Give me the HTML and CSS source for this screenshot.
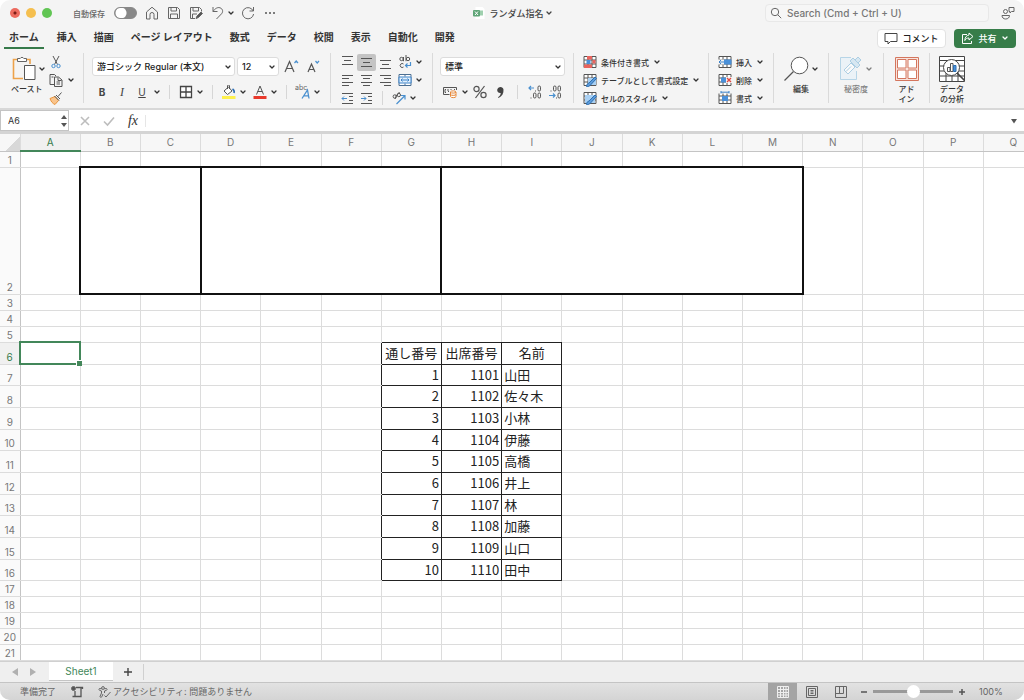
FILE: index.html
```html
<!DOCTYPE html>
<html lang="ja">
<head>
<meta charset="utf-8">
<title>ランダム指名</title>
<link rel="stylesheet" href="styles.css">
</head>
<body>
<svg class="defs" aria-hidden="true">
  <symbol id="chev" viewBox="0 0 8 8"><path d="M2 3l2 2 2-2" fill="none" stroke="currentColor" stroke-width="1.3" stroke-linecap="round" stroke-linejoin="round"/></symbol>
  <symbol id="grid" viewBox="0 0 14 14"><path d="M1 1.500h12v11H1zM1 5h12M1 9h12M5 1.500v11M9 1.500v11" fill="#fff" stroke="#555" stroke-width="1"/></symbol>
</svg>
<div class="window">
  <header class="titlebar">
    <div class="lights"><span class="light red"></span><span class="light yellow"></span><span class="light green"></span></div>
    <label class="autosave">自動保存<input type="checkbox" class="switch"></label>
    <div class="quick">
      <button aria-label="ホームへ"><svg width="14" height="14" viewBox="0 0 14 14"><path d="M1.500 6L7 1.200 12.500 6v7H9V8.500a2 2 0 0 0-4 0V13H1.500z"/></svg></button>
      <button aria-label="保存"><svg width="14" height="14" viewBox="0 0 14 14"><path d="M1.500 1.500h9l2 2v9h-11zM4 1.500v3.500h5.500V1.500M3.500 12.500V8h7v4.500"/></svg></button>
      <button aria-label="名前を付けて保存"><svg width="14" height="14" viewBox="0 0 14 14"><path d="M6 12.500H1.500v-11h9l2 2v2M4 1.500v3.500h5.500V1.500M3.500 12.500V8H8"/><path d="M7 12.500l1-2.500 4-4 1.500 1.500-4 4z" fill="#555"/></svg></button>
      <button aria-label="元に戻す"><svg width="14" height="14" viewBox="0 0 14 14"><path d="M2 1v4.500h4.500M2 5.500C4 2.500 6.500 1 9 1.800c3 1 3.300 4.200 1.500 6L5.500 13"/></svg></button>
      <button class="drop" aria-label="元に戻す一覧"><svg class="chev"><use href="#chev"/></svg></button>
      <button aria-label="やり直し"><svg width="14" height="14" viewBox="0 0 14 14"><path d="M12.500 1v4H8.500M12.200 5A5.600 5.600 0 1 0 12.600 8"/></svg></button>
      <button aria-label="その他"><svg width="14" height="14" viewBox="0 0 14 14"><g fill="#555" stroke="none"><circle cx="3" cy="7" r="1"/><circle cx="7" cy="7" r="1"/><circle cx="11" cy="7" r="1"/></g></svg></button>
    </div>
    <button class="doc"><svg width="12" height="12" viewBox="0 0 12 12"><path d="M2.500 0h7l2 2v10h-9z" fill="#fff"/><path d="M5 3.500h5v5H5z" fill="#9fd0ae"/><rect y="3" width="7" height="6.500" rx="1" fill="#5fa577"/><path d="M2 4.500l3 3.500M5 4.500L2 8" stroke="#fff" fill="none"/></svg>ランダム指名<svg class="chev"><use href="#chev"/></svg></button>
    <label class="search"><svg width="12" height="12" viewBox="0 0 12 12"><circle cx="5" cy="5" r="3.700"/><path d="M7.800 7.800l3.400 3.400"/></svg><input type="text" placeholder="Search (Cmd + Ctrl + U)" aria-label="Search"></label>
    <button class="people" aria-label="共同作業"><svg width="14" height="14" viewBox="0 0 14 14"><circle cx="4.500" cy="5.500" r="2"/><path d="M1 9.500h7.500c0 2-1.500 3.500-3.800 3.500S1 11.500 1 9.500zM8 1.500h5v4h-2.500L9 7V5.500H8z"/></svg></button>
  </header>

  <nav class="tabs">
    <button class="tab active">ホーム</button><button class="tab">挿入</button><button class="tab">描画</button><button class="tab">ページ レイアウト</button><button class="tab">数式</button><button class="tab">データ</button><button class="tab">校閲</button><button class="tab">表示</button><button class="tab">自動化</button><button class="tab">開発</button>
    <button class="comment"><svg width="14" height="13" viewBox="0 0 14 13"><path d="M1 1.500h12v8H6.500L4 12V9.500H1z"/></svg>コメント</button>
    <button class="share"><svg width="13" height="13" viewBox="0 0 13 13"><path d="M6 2.500H1.500v9h9V9M8 1l4 3.500L8 8V6C6 6 5 6.500 3.800 8.500 4 5 5.500 3.500 8 3z"/></svg>共有<svg class="chev"><use href="#chev"/></svg></button>
  </nav>

  <div class="ribbon">
    <div class="group clip">
      <div class="big"><button class="bigrow" aria-label="ペースト"><svg width="24" height="27" viewBox="0 0 24 27"><path d="M6 4.500H1.500v19H11M14 4.500h4V9" fill="none" stroke="#eda24a" stroke-width="1.600"/><path d="M5.500 6.500v-3h2.700a2 2 0 0 1 3.600 0h2.700v3z" fill="#fff" stroke="#666"/><path d="M12.500 10.500H23v14H12.500z" fill="#fff" stroke="#555"/></svg><svg class="chev"><use href="#chev"/></svg></button><span class="label">ペースト</span></div>
      <div class="rows">
        <div class="row"><button class="ico" aria-label="切り取り"><svg width="14" height="14" viewBox="0 0 14 14"><path d="M4 1l4.500 8.500M10 1L5.500 9.500" stroke="#555"/><g stroke="#4a90cf"><circle cx="4.500" cy="11" r="1.700"/><circle cx="9.500" cy="11" r="1.700"/></g></svg></button></div>
        <div class="row"><button class="ico" aria-label="コピー"><svg width="14" height="14" viewBox="0 0 14 14"><path d="M5.500 11.500H1v-10h4.500L7 3M5.500 4h4L13 7v6.500H5.500zM9 4.500V7.500h3.500M7.500 9h3.500M7.500 11h3.500M2.500 4h2" stroke="#555"/></svg></button><button class="drop" aria-label="コピー一覧"><svg class="chev"><use href="#chev"/></svg></button></div>
        <div class="row"><button class="ico" aria-label="書式のコピー"><svg width="14" height="14" viewBox="0 0 14 14"><path d="M1 7.500l5-2 3.500 4L6 13.500C3.500 12.500 2 10.500 1 7.500z" fill="#f9c48c" stroke="#e8953d"/><path d="M5.500 5l4.500 4.500M7 4l4 4M9 5.500l3.500-4" stroke="#555"/></svg></button></div>
      </div>
    </div><span class="sep"></span>

    <div class="group font">
      <div class="row first">
        <span class="pick name"><select aria-label="フォント"><option>游ゴシック Regular (本文)</option></select><svg class="chev"><use href="#chev"/></svg></span>
        <span class="pick size"><select aria-label="フォント サイズ"><option>12</option></select><svg class="chev"><use href="#chev"/></svg></span>
        <button class="ico grow" aria-label="拡大"><svg width="16" height="16" viewBox="0 0 16 16"><path d="M2 13L6.500 2.500 11 13M3.500 9.500h6" stroke="#555" stroke-width="1.200"/><path d="M11.500 4l1.700-2L15 4" stroke="#4a90cf" stroke-width="1.200"/></svg></button>
        <button class="ico grow" aria-label="縮小"><svg width="16" height="16" viewBox="0 0 16 16"><path d="M3 13L6.500 5 10 13M4 10.500h5" stroke="#555" stroke-width="1.200"/><path d="M10.500 2l1.700 2L14 2" stroke="#4a90cf" stroke-width="1.200"/></svg></button>
      </div>
      <div class="row second">
        <button class="ltr b">B</button><button class="ltr i">I</button><button class="ltr u">U</button><button class="drop" aria-label="下線一覧"><svg class="chev"><use href="#chev"/></svg></button><span class="bar"></span>
        <button class="ico" aria-label="罫線"><svg width="14" height="14" viewBox="0 0 14 14"><path d="M1.500 1.500h11v11h-11zM7 1.500v11M1.500 7h11" fill="#fff" stroke="#444" stroke-width="1.300"/></svg></button><button class="drop" aria-label="罫線一覧"><svg class="chev"><use href="#chev"/></svg></button><span class="bar"></span>
        <button class="ico" aria-label="塗りつぶし"><svg width="14" height="14" viewBox="0 0 14 14"><path d="M0 11h13.500v3H0z" fill="#fdf04e"/><path d="M2 6l4.500-4 3.500 4-4.500 3.500zM5.500 4V1a1 1 0 0 1 2 0v3" fill="#fff" stroke="#555"/><path d="M10.500 4c1.500 1 2 2.500 1.500 4" stroke="#2f6fb5" stroke-width="1.600"/></svg></button><button class="drop" aria-label="塗りつぶし一覧"><svg class="chev"><use href="#chev"/></svg></button>
        <button class="ico color" aria-label="文字色"><svg width="14" height="14" viewBox="0 0 14 14"><path d="M0.500 11h13v3h-13z" fill="#e8392c"/><path d="M3.500 9.500L7 1l3.500 8.500M4.700 6.500h4.600" stroke="#555"/></svg></button><button class="drop" aria-label="文字色一覧"><svg class="chev"><use href="#chev"/></svg></button><span class="bar"></span>
        <button class="ico" aria-label="ふりがな"><svg width="16" height="16" viewBox="0 0 16 16"><text x="0" y="6" font-size="7" fill="#666">abc</text><path d="M7 14.500L12.500 6 14 14.500M9 11.800h4.500" stroke="#4a90cf" stroke-width="1.300"/></svg></button><button class="drop" aria-label="ふりがな一覧"><svg class="chev"><use href="#chev"/></svg></button>
      </div>
    </div><span class="sep"></span>

    <div class="group align">
      <div class="row"><button class="ico" aria-label="上揃え"><svg width="13" height="13" viewBox="0 0 13 13"><path d="M1 0.500h11M3 4.500h7M1 8.500h11"/></svg></button><button class="ico on" aria-label="上下中央"><svg width="13" height="13" viewBox="0 0 13 13"><path d="M1 2.500h11M3 6.500h7M1 10.500h11"/></svg></button><button class="ico" aria-label="下揃え"><svg width="13" height="13" viewBox="0 0 13 13"><path d="M1 4.500h11M3 8.500h7M1 12.500h11"/></svg></button><button class="ico" aria-label="折り返し"><svg width="14" height="14" viewBox="0 0 14 14"><g stroke="#555"><circle cx="3.500" cy="4" r="1.700"/><path d="M5.500 2v4.200M8 0v6.200M5.500 9a2 2 0 1 0 0 3"/><circle cx="10" cy="4" r="1.700"/></g><path d="M12.500 7v3.500H7.500M9.500 8.500l-2 2 2 2" stroke="#4a90cf" stroke-width="1.200"/></svg></button><button class="drop" aria-label="折り返し一覧"><svg class="chev"><use href="#chev"/></svg></button></div>
      <div class="row"><button class="ico" aria-label="左揃え"><svg width="13" height="13" viewBox="0 0 13 13"><path d="M1 1.500h11M1 4.500h7M1 8.500h11M1 11.500h7"/></svg></button><button class="ico" aria-label="中央揃え"><svg width="13" height="13" viewBox="0 0 13 13"><path d="M1 1.500h11M3 4.500h7M1 8.500h11M3 11.500h7"/></svg></button><button class="ico" aria-label="右揃え"><svg width="13" height="13" viewBox="0 0 13 13"><path d="M1 1.500h11M5 4.500h7M1 8.500h11M5 11.500h7"/></svg></button><button class="ico" aria-label="セルを結合"><svg width="14" height="14" viewBox="0 0 14 14"><path d="M1 1.500h12v11H1zM7 1.500v2M7 10.500v2" fill="#fff" stroke="#4b6f93"/><path d="M1 4h12v6H1z" fill="#e2f0fc" stroke="#3d83c9"/><path d="M3 7h8M4.500 5.500L3 7l1.500 1.500M9.500 5.500L11 7 9.500 8.500" stroke="#3d83c9"/></svg></button><button class="drop" aria-label="結合一覧"><svg class="chev"><use href="#chev"/></svg></button></div>
      <div class="row"><button class="ico" aria-label="インデントを減らす"><svg width="13" height="13" viewBox="0 0 13 13"><path d="M1 1.500h11M8 4.500h4M8 8.500h4M1 11.500h11"/><path d="M6 6.500H1M3 4.500l-2 2 2 2" stroke="#4a90cf"/></svg></button><button class="ico" aria-label="インデントを増やす"><svg width="13" height="13" viewBox="0 0 13 13"><path d="M1 1.500h11M8 4.500h4M8 8.500h4M1 11.500h11"/><path d="M1 6.500h5M4 4.500l2 2-2 2" stroke="#4a90cf"/></svg></button><span class="bar"></span><button class="ico" aria-label="方向"><svg width="14" height="14" viewBox="0 0 14 14"><g stroke="#555"><circle cx="2.800" cy="5.500" r="1.700"/><path d="M4.500 4L3 8M7.500 1L4.500 5"/><circle cx="6.800" cy="4" r="1.700"/></g><path d="M4.500 13L12.500 5M9 4.500h4v4" stroke="#4a90cf" stroke-width="1.200"/></svg></button><button class="drop" aria-label="方向一覧"><svg class="chev"><use href="#chev"/></svg></button></div>
    </div><span class="sep"></span>

    <div class="group number">
      <div class="row first"><span class="pick format"><select aria-label="表示形式"><option>標準</option></select><svg class="chev"><use href="#chev"/></svg></span></div>
      <div class="row second">
        <button class="ico" aria-label="通貨"><svg width="14" height="14" viewBox="0 0 14 14"><path d="M6.500 9.500H0.500v-7h13V5M3 4.500H2v3h1M5 4v2l1 1M8 4v1M11 4.500h1" stroke="#555"/><path d="M7.500 7c0-1.500 5.500-1.500 5.500 0v4.500c0 1.500-5.500 1.500-5.500 0zM7.500 7c0 1.500 5.500 1.500 5.500 0M7.500 9.300c0 1.500 5.500 1.500 5.500 0" fill="#fff" stroke="#e8893a"/></svg></button><button class="drop" aria-label="通貨一覧"><svg class="chev"><use href="#chev"/></svg></button><button class="ico" aria-label="パーセント"><svg width="14" height="14" viewBox="0 0 14 14"><path d="M11.500 1l-9 12" stroke="#555" stroke-width="1.200"/><g stroke="#555" stroke-width="1.200"><circle cx="3.500" cy="4" r="2.600"/><circle cx="10.500" cy="10" r="2.600"/></g></svg></button><button class="ico" aria-label="桁区切り"><svg width="14" height="14" viewBox="0 0 14 14"><path d="M10.500 4.500C10.800 8.500 9 11.500 5.500 13l-.5-.8C7 11 7.700 9.500 7.700 8 5.500 8.300 4 6.800 4.200 4.800 4.700 1.200 10 .8 10.500 4.500z" fill="#444"/></svg></button><span class="bar"></span><button class="ico" aria-label="小数点以下を増やす"><svg width="14" height="14" viewBox="0 0 14 14"><path d="M6 3H1M3 1L1 3l2 2" stroke="#4a90cf" stroke-width="1.200"/><g stroke="#555"><rect x="10" y="1" width="2.500" height="5" rx="1.200"/><rect x="5.500" y="8" width="2.500" height="5" rx="1.200"/><rect x="10" y="8" width="2.500" height="5" rx="1.200"/><path d="M7.500 5.500v1M3 12.500v1"/></g></svg></button><button class="ico" aria-label="小数点以下を減らす"><svg width="14" height="14" viewBox="0 0 14 14"><path d="M1 10.500h6M5 8.500l2 2-2 2" stroke="#4a90cf" stroke-width="1.200"/><g stroke="#555"><rect x="5.500" y="1" width="2.500" height="5" rx="1.200"/><rect x="10" y="1" width="2.500" height="5" rx="1.200"/><rect x="10" y="8" width="2.500" height="5" rx="1.200"/><path d="M3 5.500v1M8.500 12.500v1"/></g></svg></button>
      </div>
    </div><span class="sep"></span>

    <div class="group list styles">
      <button class="line"><svg width="14" height="14" viewBox="0 0 14 14"><use href="#grid"/><path d="M4 1h5v3.500H4zM1 9.500h8V13H1zM9.500 5h3v3.500h-3z" fill="#e8645f"/><path d="M3.500 5h4v4h-4z" fill="#4a90d9"/></svg>条件付き書式<svg class="chev"><use href="#chev"/></svg></button>
      <button class="line"><svg width="14" height="14" viewBox="0 0 14 14"><use href="#grid"/><path d="M5 5h8v7H5z" fill="#a9d0f3"/><path d="M3.500 13.500c0-2 1-3 2.500-3.500l6-6 1.500 1.500-6 6.500c-1 1.500-2 1.500-4 1.500z" fill="#5b9bdb" stroke="#2e6fb0"/></svg>テーブルとして書式設定<svg class="chev"><use href="#chev"/></svg></button>
      <button class="line"><svg width="14" height="14" viewBox="0 0 14 14"><use href="#grid"/><path d="M2 4h10v8H2z" fill="#a9d0f3"/><path d="M3.500 13.500c0-2 1-3 2.500-3.500l6-6 1.500 1.500-6 6.500c-1 1.500-2 1.500-4 1.500z" fill="#5b9bdb" stroke="#2e6fb0"/></svg>セルのスタイル<svg class="chev"><use href="#chev"/></svg></button>
    </div><span class="sep"></span>

    <div class="group list cells">
      <button class="line"><svg width="14" height="14" viewBox="0 0 14 14"><use href="#grid"/><path d="M6 4.500h7.500v5H6z" fill="#4a90d9"/><path d="M0 4.500h6v5H0z" fill="#f4f4f4"/><path d="M6 7H1M3 5L1 7l2 2" stroke="#3d83c9" fill="none"/></svg>挿入<svg class="chev"><use href="#chev"/></svg></button>
      <button class="line"><svg width="14" height="14" viewBox="0 0 14 14"><use href="#grid"/><path d="M3 4.500h5v5H3z" fill="#4a90d9"/><path d="M8 4h6v6H8z" fill="#f4f4f4"/><path d="M9 5l4 4M13 5L9 9" stroke="#e0463f" stroke-width="1.300"/></svg>削除<svg class="chev"><use href="#chev"/></svg></button>
      <button class="line"><svg width="14" height="14" viewBox="0 0 14 14"><use href="#grid"/><path d="M4 5h6v5H4z" fill="#4a90d9"/><path d="M0 0h14v2.500H0z" fill="#f4f4f4"/><path d="M3 1.200h8M3 0v2.500M11 0v2.500" stroke="#3d83c9"/></svg>書式<svg class="chev"><use href="#chev"/></svg></button>
    </div><span class="sep"></span>

    <div class="group big edit"><button class="bigrow" aria-label="編集"><svg width="26" height="26" viewBox="0 0 26 26"><circle cx="16.500" cy="9.500" r="8.300" fill="#fff" stroke="#555"/><path d="M10.500 15.500L1.500 24.500" stroke="#555" stroke-width="1.200"/></svg><svg class="chev"><use href="#chev"/></svg></button><span class="label">編集</span></div><span class="sep"></span>
    <div class="group big sens"><button class="bigrow" disabled aria-label="秘密度"><svg width="24" height="26" viewBox="0 0 24 26"><path d="M12 1.500H1.500v22h16V15" fill="#e6f2fa" stroke="#8fc1e0"/><path d="M5 14l7-7 4 4-7 7zM7 15.500l5-5" fill="#fff" stroke="#7db5d8"/><path d="M11 5l3-3 7 7-3 3zM16 4l3-3 3 3-3 3" fill="#c4dff0" stroke="#7db5d8"/></svg><svg class="chev"><use href="#chev"/></svg></button><span class="label">秘密度</span></div><span class="sep"></span>
    <div class="group big addin"><button class="bigrow" aria-label="アドイン"><svg width="26" height="26" viewBox="0 0 26 26"><path d="M1.500 1.500h23v23h-23z" fill="#f8e4de" stroke="#d4765e"/><path d="M3.500 3.500h8.500v8.500H3.500zM14 3.500h8.500v8.500H14zM3.500 14h8.500v8.500H3.500zM14 14h8.500v8.500H14z" fill="#fff" stroke="#d4765e"/></svg></button><span class="label">アド<br>イン</span></div><span class="sep"></span>
    <div class="group big data"><button class="bigrow" aria-label="データの分析"><svg width="26" height="26" viewBox="0 0 26 26"><path d="M0.500 0.500h25v25H0.500zM0.500 4.500h25M0.500 10h25M0.500 15h25M0.500 20h25M7 15v10M13 20v5M19 15v10" fill="#fff" stroke="#444"/><circle cx="12.500" cy="11.500" r="8" fill="#fff" stroke="#444"/><path d="M18 17l7.500 7.500" stroke="#444" stroke-width="1.600"/><path d="M8.500 11.500h2.500v4H8.500z" fill="#fff" stroke="#555"/><path d="M11.500 7.500h2.500v8h-2.500z" fill="#fff" stroke="#555"/><path d="M14.500 9.500H17v6h-2.500z" fill="#4a90d9" stroke="#2e6fb0"/></svg></button><span class="label">データ<br>の分析</span></div>
  </div>

  <div class="formula">
    <div class="namebox"><input type="text" value="A6" aria-label="名前ボックス"><svg width="8" height="14" viewBox="0 0 8 14"><path d="M1 5l3-4 3 4zM1 9l3 4 3-4z" fill="#555"/></svg></div>
    <button aria-label="キャンセル"><svg width="12" height="12" viewBox="0 0 12 12"><path d="M2 2l8 8M10 2l-8 8" stroke="#bdbdbd" stroke-width="1.600"/></svg></button>
    <button aria-label="入力"><svg width="12" height="12" viewBox="0 0 12 12"><path d="M1 6.500l3.500 3.500L11 2.500" stroke="#bdbdbd" stroke-width="1.600"/></svg></button>
    <button class="fx">fx</button>
    <input type="text" class="entry" aria-label="数式バー">
    <button aria-label="展開"><svg width="8" height="8" viewBox="0 0 8 8"><path d="M1 2h6L4 6.500z" fill="#555"/></svg></button>
  </div>

  <main class="sheet">
    <table class="cellgrid"><thead></thead><tbody></tbody></table>
  </main>

  <div class="sheetbar">
    <button class="arrow" aria-label="前のシート"><svg width="8" height="8" viewBox="0 0 8 8"><path d="M7 0v8L1 4z" fill="#b0b0b0"/></svg></button>
    <button class="arrow" aria-label="次のシート"><svg width="8" height="8" viewBox="0 0 8 8"><path d="M1 0v8l6-4z" fill="#b0b0b0"/></svg></button>
    <button class="sheettab">Sheet1</button>
    <button class="add" aria-label="シートを追加"><svg width="10" height="10" viewBox="0 0 10 10"><path d="M5 1v8M1 5h8" stroke="#444" stroke-width="1.400"/></svg></button>
  </div>

  <footer class="status">
    <span class="ready">準備完了</span>
    <button class="macro" aria-label="マクロの記録"><svg width="13" height="12" viewBox="0 0 13 12"><circle cx="2.500" cy="2.500" r="2" fill="#555"/><path d="M5 1.500h6.500v1.500M10 1.500v9H8M4 5v5.500h4M1.500 10.500h5" stroke="#555" stroke-width="1.300"/></svg></button>
    <button class="access"><svg width="13" height="12" viewBox="0 0 13 12"><circle cx="5" cy="2" r="1.400"/><path d="M3.600 2.800L1.500 2.500C.5 3 1 4 1.500 4.300L3.500 5v2L2 10.500c.3 1.200 1.300 1 1.800.3L5 8M6.400 2.800l2.100-.3c1 .5.500 1.500 0 1.800L6.500 5v2M6.500 9.500L8 11l4.500-5"/></svg>アクセシビリティ: 問題ありません</button>
    <div class="views">
      <button class="on" aria-label="標準"><svg width="12" height="12" viewBox="0 0 12 12"><path d="M0.500 0.500h11v11H0.500zM0.500 3.500h11M0.500 6.500h11M0.500 9h11M3.500 0.500v11M6.500 0.500v11M9 0.500v11"/></svg></button>
      <button aria-label="ページ レイアウト"><svg width="12" height="12" viewBox="0 0 12 12"><path d="M0.500 0.500h11v11H0.500zM2.500 2.500h7v7h-7zM4.500 4.500h3M4.500 6h3M4.500 7.500h3"/></svg></button>
      <button aria-label="改ページ プレビュー"><svg width="12" height="12" viewBox="0 0 12 12"><path d="M0.500 0.500h11v11H0.500zM0.500 7.500h8v-7M4.500 0.500v7"/></svg></button>
    </div>
    <div class="zoom"><button aria-label="縮小"><svg width="8" height="8" viewBox="0 0 8 8"><path d="M1 4h6" stroke="#555" stroke-width="1.500"/></svg></button><input type="range" min="0" max="100" value="50" aria-label="ズーム"><button aria-label="拡大"><svg width="8" height="8" viewBox="0 0 8 8"><path d="M1 4h6M4 1v6" stroke="#555" stroke-width="1.500"/></svg></button><span class="percent">100%</span></div>
  </footer>
</div>
<script src="grid.js"></script>
</body>
</html>
```
FILE: styles.css
```css
* { box-sizing: border-box; }
body { margin: 0; background: #fff; color: #333; font-family: Inter, "Noto Sans CJK JP", sans-serif; font-size: 8px; }
button, input, select { font: inherit; color: inherit; border: 0; padding: 0; margin: 0; background: none; outline: 0; }
button { display: flex; align-items: center; justify-content: center; }
svg { flex: none; fill: none; stroke: none; display: block; }
.defs { position: absolute; width: 0; height: 0; }
.chev { width: 8px; height: 8px; }

.window { display: flex; flex-direction: column; height: 100vh; background: #f4f4f4; border-radius: 10px; overflow: hidden; }

.titlebar { display: flex; align-items: center; height: 26px; padding: 0 9px 0 10px; flex: none; }
.lights { display: flex; gap: 6px; }
.light { width: 10px; height: 10px; border-radius: 50%; }
.red { background: radial-gradient(circle, #7c1d17 0 1px, #ec6a5e 2px); }
.yellow { background: #f5bf4f; }
.green { background: #61c554; }
.autosave { display: flex; align-items: center; gap: 9px; margin-left: 21px; color: #666; font-weight: 500; }
.switch { appearance: none; width: 23px; height: 12px; border-radius: 6px; background: radial-gradient(circle at 6px 5px, #fff 0 5px, #888 6px); border: 1px solid #888; }
.quick { display: flex; align-items: center; gap: 8px; margin-left: 8px; }
.quick svg, .search svg, .people svg { stroke: #666; stroke-width: 1; }
.quick .drop { margin: 0 -3px 0 -7px; }
.quick .chev, .doc .chev { stroke: none; }
.doc { margin: 0 auto; padding-right: 16px; gap: 4px; font-size: 9px; font-weight: 500; color: #444; }
.doc .chev { margin-left: -3px; }
.search { display: flex; align-items: center; gap: 5px; width: 224px; height: 18px; padding-left: 4px; border: 1px solid #e8e8e8; border-radius: 4px; background: #f6f6f6; }
.search input { flex: 1; min-width: 0; font-size: 10px; font-weight: 500; }
.search input::placeholder { color: #777; opacity: 1; }
.people { margin-left: 12px; }

.tabs { display: flex; align-items: center; height: 26px; padding: 0 8px 2px 4px; gap: 8px; flex: none; }
.tab { height: 22px; padding: 0 5px 1px; border-bottom: 2px solid transparent; font-size: 10px; font-weight: 600; font-family: "Noto Sans CJK JP", sans-serif; white-space: nowrap; }
.tab + .tab { padding: 0 4px 1px 5px; }
.tab.active { border-color: #367a4a; font-weight: 700; }
.comment, .share { height: 19px; border-radius: 4px; font-size: 9px; font-weight: 500; gap: 4px; }
.comment { margin-left: auto; width: 69px; background: #fff; border: 1px solid #e2e2e2; color: #222; }
.comment svg { stroke: #444; }
.share { width: 62px; background: #377d49; color: #fff; }
.share svg:first-child { stroke: #fff; }

.ribbon { display: flex; height: 58px; padding-top: 1px; border-bottom: 2px solid #d8d8d8; flex: none; }
.group { height: 54px; flex: none; }
.sep { width: 1px; height: 50px; background: #dadada; flex: none; }
.row { display: flex; align-items: center; height: 18px; }
.drop { width: 10px; height: 16px; flex: none; }
.ico { width: 18px; height: 17px; flex: none; }
.bar { width: 1px; height: 14px; margin: 0 7px; background: #d6d6d6; flex: none; }
.big { display: flex; flex-direction: column; align-items: center; }
.bigrow { height: 31px; gap: 2px; }
.label { font-size: 8px; line-height: 10px; font-weight: 500; text-align: center; color: #333; white-space: nowrap; }
.clip { display: flex; width: 83px; padding-left: 11px; }
.clip .big { width: 35px; }
.clip .big .label { align-self: flex-start; }
.clip .ico { width: 20px; }
.font { width: 246px; padding: 4px 0 0 8px; }
.first { height: 19px; gap: 2px; }
.second { margin-top: 7px; }
.pick { display: flex; position: relative; height: 19px; background: #fff; border: 1px solid #dcdcdc; border-radius: 3px; }
.pick select { appearance: none; width: 100%; padding: 0 12px 0 4px; font-size: 9px; font-weight: 500; color: #222; }
.pick .chev { position: absolute; right: 2px; top: 5px; pointer-events: none; }
.name { width: 143px; }
.size { width: 42px; }
.grow { width: 20px; }
.ltr { width: 20px; height: 18px; font-size: 10px; color: #444; }
.b { font-weight: 700; }
.i { font-style: italic; font-family: "Liberation Serif", serif; font-size: 12px; }
.u { text-decoration: underline; }
.color { margin-left: 3px; }
.align { width: 101px; padding-left: 7px; }
.align .ico { width: 19px; }
.align svg { stroke: #555; }
.align .chev { stroke: none; }
.align .bar { margin: 0 6px; }
.align .on { background: #c4c4c4; border-radius: 2px; }
.number { width: 140px; padding: 4px 0 0 7px; }
.number .ico { width: 20px; }
.format { width: 125px; }
.list { display: flex; flex-direction: column; align-items: flex-start; padding-left: 9px; }
.line { height: 18px; gap: 4px; font-size: 8px; font-weight: 500; white-space: nowrap; }
.styles { width: 134px; }
.cells { width: 64px; }
.edit { width: 54px; }
.sens { width: 54px; opacity: .6; }
.addin { width: 45px; }
.data { width: 44px; }

.formula { display: flex; align-items: center; height: 24px; background: #fff; border-bottom: 3px solid #d4d4d4; flex: none; padding-right: 6px; }
.namebox { display: flex; align-items: center; width: 69px; height: 21px; border: 1px solid #c4c4c4; padding-left: 7px; margin-right: 4px; }
.namebox input { flex: 1; min-width: 0; font-size: 9px; }
.formula button { width: 24px; height: 20px; }
.formula button:last-child { width: 8px; }
.formula .fx { font: italic 14px "Liberation Serif", serif; color: #333; }
.entry { flex: 1; min-width: 0; height: 12px; border-left: 1px solid #e6e6e6; font-size: 10px; }

.sheet { flex: 1; min-height: 0; overflow: hidden; background: #fff; }
.cellgrid { table-layout: fixed; width: calc(100% + 20px); border-collapse: collapse; font-family: "Noto Sans CJK JP", sans-serif; font-size: 13px; line-height: 15px; color: #222; }
.cellgrid th, .cellgrid td { padding: 0; height: 16px; border: 1px solid #dcdcdc; overflow: hidden; white-space: nowrap; }
.cellgrid th { font-size: 10px; line-height: 12px; font-weight: 400; color: #777; background: #f7f7f7; font-family: Inter, sans-serif; }
.cellgrid thead th { height: 17px; border-top: 0; border-bottom-color: #c4c4c4; }
.cellgrid .corner { width: 20px; background: linear-gradient(135deg, #f7f7f7 60%, #d8d8d8 60%); border-left: 0; }
.cellgrid tbody th { vertical-align: bottom; background: #fafafa; border-left: 0; border-right-color: #c4c4c4; padding-bottom: 1px; }
.cellgrid th.current { color: #367a4a; background: #f0f0f0; }
.cellgrid thead th.current { border-bottom: 2px solid #43875a; }
.cellgrid .r2 > * { height: 127px; }
.cellgrid .tall > * { height: 22px; }
.cellgrid .mid > * { height: 21px; }
.cellgrid td.box { border: 2px solid #111; }
.cellgrid td.data { border: 1px solid #222; padding-bottom: 1px; }
.cellgrid td.above { border-bottom-color: #222; }
.cellgrid td.before { border-right-color: #222; }
.cellgrid td.num { text-align: right; padding-right: 2px; }
.cellgrid td.txt { padding-left: 2px; }
.cellgrid td.head { text-align: center; }
.cellgrid td.selected { position: relative; border: 2px solid #43875a; overflow: visible; }
.selected::after { content: ""; position: absolute; right: -3px; bottom: -3px; width: 5px; height: 5px; background: #43875a; border: 1px solid #fff; border-width: 1px 0 0 1px; }

.sheetbar { display: flex; align-items: center; height: 21px; background: #efefef; border-top: 1px solid #d0d0d0; flex: none; padding-left: 6px; }
.arrow { width: 18px; height: 20px; }
.sheettab { width: 64px; height: 19px; margin: 0 0 2px 7px; background: #fff; color: #43875a; font-size: 10px; border-bottom: 1px solid #c4c4c4; }
.add { width: 31px; height: 16px; border-right: 1px solid #d0d0d0; }

.status { display: flex; align-items: center; height: 18px; background: linear-gradient(#e2e2e2, #d4d4d4); border-top: 1px solid #c4c4c4; flex: none; padding: 0 20px; font-size: 9px; color: #666; }
.status svg { stroke: #666; }
.macro { margin-left: 15px; }
.access { margin-left: 14px; gap: 2px; }
.views { display: flex; margin-left: auto; }
.views button { width: 29px; height: 18px; }
.views .on { background: #a4a4a4; }
.views .on svg { stroke: #eee; }
.zoom { display: flex; align-items: center; margin-left: 5px; }
.zoom input { appearance: none; width: 80px; height: 14px; margin: 0 5px; background: linear-gradient(#999, #999) center / 100% 3px no-repeat; }
.zoom input::-webkit-slider-thumb { appearance: none; width: 13px; height: 13px; border-radius: 50%; background: #fff; }
.percent { width: 25px; margin-left: 13px; font-size: 9px; }
```
FILE: grid.js
```js
const letters = 'ABCDEFGHIJKLMNOPQ'.split('');
const people = ['山田', '佐々木', '小林', '伊藤', '高橋', '井上', '林', '加藤', '山口', '田中'];
const merges = { B: 2, D: 4, H: 6 };

function cell(tag, cls, text) {
  const el = document.createElement(tag);
  if (cls) el.className = cls;
  if (text !== undefined) el.textContent = text;
  return el;
}

const headRow = cell('tr');
headRow.append(cell('th', 'corner'));
letters.forEach(l => headRow.append(cell('th', l === 'A' ? 'current' : '', l)));
document.querySelector('.cellgrid thead').append(headRow);

const body = document.querySelector('.cellgrid tbody');
for (let r = 1; r <= 21; r++) {
  const list = r >= 6 && r <= 16;
  const row = cell('tr', r === 2 ? 'r2' : list ? (r % 3 === 1 ? 'mid' : 'tall') : '');
  row.append(cell('th', r === 6 ? 'current' : '', r));
  for (let c = 0; c < letters.length; c++) {
    const l = letters[c];
    let td = cell('td');
    if (r === 2 && merges[l]) {
      td = cell('td', 'box');
      td.colSpan = merges[l];
      c += merges[l] - 1;
    } else if (r === 6 && l === 'A') {
      td = cell('td', 'selected');
    } else if (list && l === 'F') {
      td = cell('td', 'before');
    } else if (r === 5 && 'GHI'.includes(l)) {
      td = cell('td', 'above');
    } else if (list && 'GHI'.includes(l)) {
      const i = 'GHI'.indexOf(l);
      td = r === 6
        ? cell('td', 'data head', ['通し番号', '出席番号', '名前'][i])
        : cell('td', i === 2 ? 'data txt' : 'data num', [r - 6, 1094 + r, people[r - 7]][i]);
    }
    row.append(td);
  }
  body.append(row);
}
```
